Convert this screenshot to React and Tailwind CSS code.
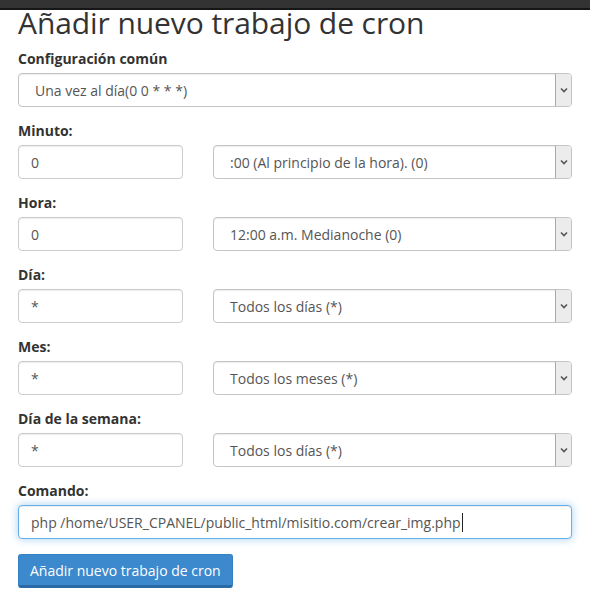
import React from 'react';

const rows = [
  { label: 'Minuto:', value: '0', option: ':00 (Al principio de la hora). (0)' },
  { label: 'Hora:', value: '0', option: '12:00 a.m. Medianoche (0)' },
  { label: 'Día:', value: '*', option: 'Todos los días (*)' },
  { label: 'Mes:', value: '*', option: 'Todos los meses (*)' },
  { label: 'Día de la semana:', value: '*', option: 'Todos los días (*)' },
];

function Chevron() {
  return (
    <svg width="8" height="6" viewBox="0 0 8 6" className="block">
      <polyline points="1,1.5 4,4.5 7,1.5" fill="none" stroke="#555" strokeWidth="1.6" />
    </svg>
  );
}

function FakeSelect({ children }) {
  return (
    <div className="flex h-[34px] items-stretch rounded-[4px] border border-[#c4c4c4] bg-white shadow-[inset_0_1px_1px_rgba(0,0,0,0.075)]">
      <div className="flex flex-1 items-center pl-[16px] text-[14px] text-[#555] whitespace-nowrap">
        {children}
      </div>
      <div className="flex w-[16px] items-center justify-center rounded-r-[3px] border-l border-[#aaa] bg-[#ececec]">
        <Chevron />
      </div>
    </div>
  );
}

function TextBox({ children, focused }) {
  return (
    <div
      className={
        focused
          ? 'flex h-[34px] items-center rounded-[4px] border border-[#66afe9] bg-white px-[12px] text-[14px] text-[#555] shadow-[inset_0_1px_1px_rgba(0,0,0,0.075),0_0_8px_rgba(102,175,233,0.6)]'
          : 'flex h-[34px] items-center rounded-[4px] border border-[#ccc] bg-white px-[12px] text-[14px] text-[#555] shadow-[inset_0_1px_1px_rgba(0,0,0,0.075)]'
      }
    >
      {children}
    </div>
  );
}

function Label({ children }) {
  return <div className="mb-[4px] text-[14px] font-bold leading-[20px] text-[#333]">{children}</div>;
}

export default function App() {
  return (
    <div className="min-h-[597px] w-[590px] bg-white font-['Open_Sans',sans-serif]">
      <div className="h-[10px] border-b-2 border-[#161616] bg-[#333]" />
      <div className="px-[18px]">
        <h1 className="text-[30px] font-normal leading-[26px] tracking-[-0.08px] text-[#333]">Añadir nuevo trabajo de cron</h1>

        <div className="mb-[14px] mt-[13px]">
          <Label>Configuración común</Label>
          <FakeSelect>Una vez al día(0 0 * * *)</FakeSelect>
        </div>

        {rows.map((r) => (
          <div key={r.label} className="mb-[14px]">
            <Label>{r.label}</Label>
            <div className="grid grid-cols-[165px_1fr] gap-[30px]">
              <TextBox>{r.value}</TextBox>
              <FakeSelect>{r.option}</FakeSelect>
            </div>
          </div>
        ))}

        <div className="mb-[15px]">
          <Label>Comando:</Label>
          <TextBox focused>
            <span className="whitespace-nowrap">php /home/USER_CPANEL/public_html/misitio.com/crear_img.php</span>
            <span className="ml-[1px] h-[19px] w-px bg-[#222]" />
          </TextBox>
        </div>

        <button
          type="button"
          className="h-[34px] rounded-[3px] border border-[#3580c2] border-b-[3px] border-b-[#2a6aa6] bg-[#3c89cd] px-[11px] text-[14px] text-white"
        >
          Añadir nuevo trabajo de cron
        </button>
      </div>
    </div>
  );
}
